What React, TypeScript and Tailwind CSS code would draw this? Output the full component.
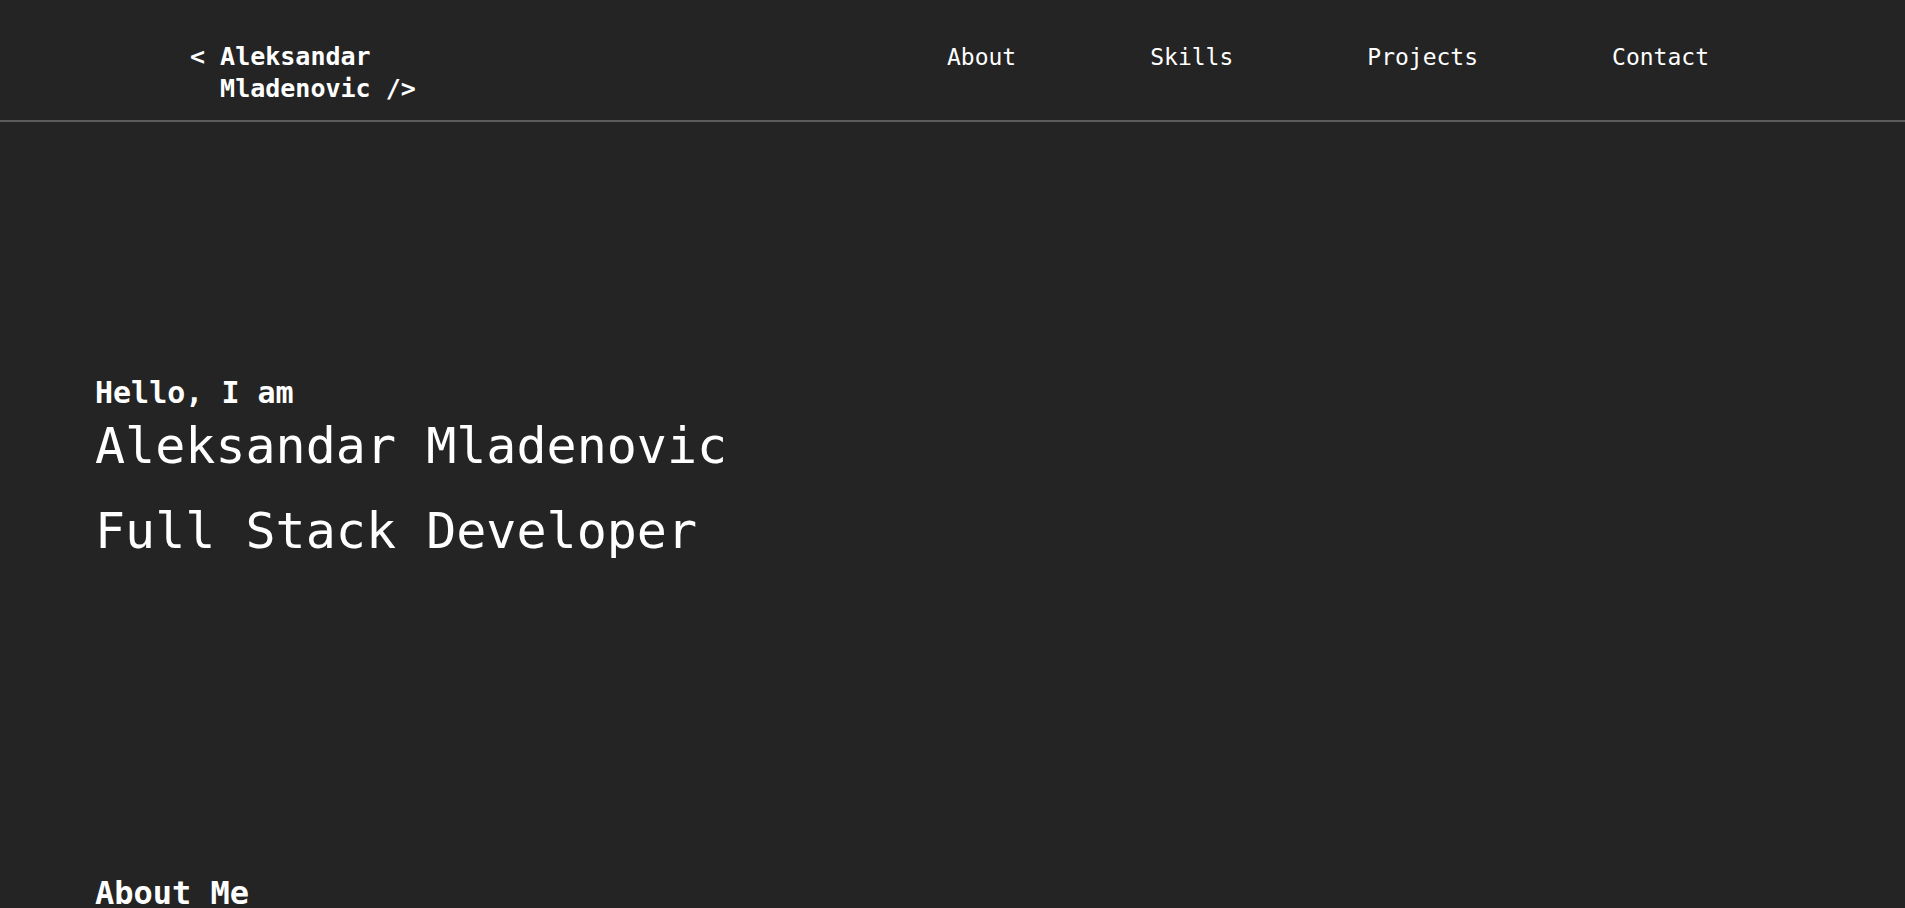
import React from 'react'

const links = ['About', 'Skills', 'Projects', 'Contact']

const Header = (): JSX.Element => {
    return (
        <header className="h-[122px] border-b-2 border-[#5c5c5c] pl-[190px] pr-[196px] pt-[41px] flex items-start justify-between">
            <a className="text-[25px] leading-[32px] font-bold text-white whitespace-pre">
                {'< Aleksandar\n  Mladenovic />'}
            </a>
            <nav className="flex items-start gap-[134px]">
                {links.map((link) => (
                    <a
                        key={link}
                        href={`#${link.toLowerCase()}`}
                        className="text-[23px] leading-[32px] text-white"
                    >
                        {link}
                    </a>
                ))}
            </nav>
        </header>
    )
}

const Hero = (): JSX.Element => {
    return (
        <section className="pl-[95px] pt-[253px] pb-[312px]">
            <p className="text-[30px] leading-[36px] font-bold">Hello, I am</p>
            <h1 className="mt-[5px] text-[50px] leading-[60px]">Aleksandar Mladenovic</h1>
            <h2 className="mt-[25px] text-[50px] leading-[60px]">Full Stack Developer</h2>
        </section>
    )
}

const Section = ({ id, title }: { id: string; title: string }): JSX.Element => {
    return (
        <section id={id} className="pl-[95px] min-h-[820px]">
            <h2 className="text-[32px] leading-[40px] font-bold">{title}</h2>
        </section>
    )
}

export default function App(): JSX.Element {
    return (
        <div className="h-screen overflow-y-auto bg-[#242424] text-white font-['DejaVu_Sans_Mono',monospace] [&::-webkit-scrollbar]:w-[6px] [&::-webkit-scrollbar-track]:bg-[#f1f1f1] [&::-webkit-scrollbar-thumb]:bg-[#c6c6c6]">
            <Header />
            <Hero />
            <Section id="about" title="About Me" />
            <Section id="skills" title="Skills" />
            <Section id="projects" title="Projects" />
            <Section id="contact" title="Contact" />
        </div>
    )
}
